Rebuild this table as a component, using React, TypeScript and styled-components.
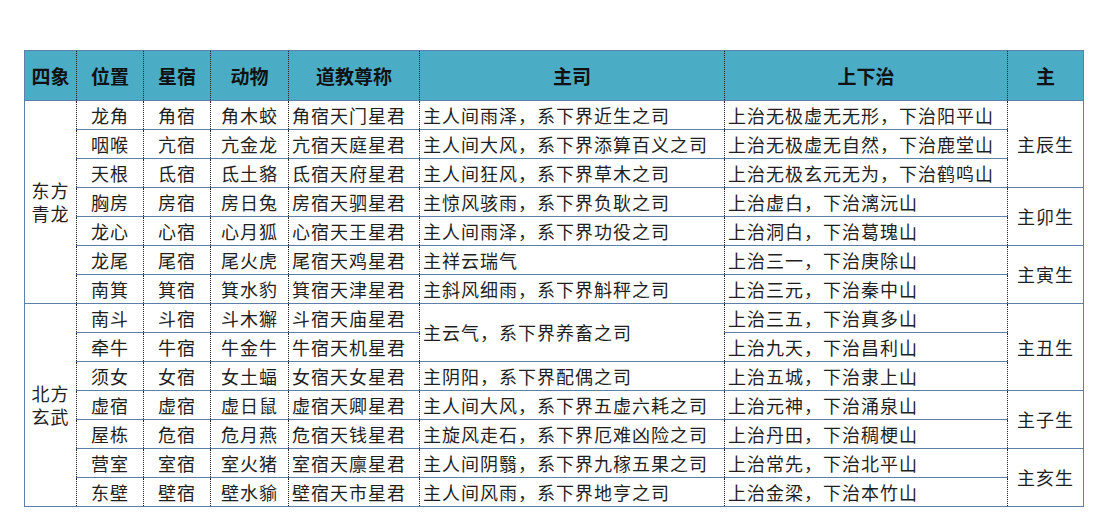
import React from "react";
import styled, { createGlobalStyle } from "styled-components";

const GlobalStyle = createGlobalStyle`
  html, body {
    margin: 0;
    padding: 0;
    background: #ffffff;
  }
  body {
    font-family: "Noto Sans CJK SC", "Noto Sans", sans-serif;
    color: #111;
  }
`;

const Page = styled.div`
  padding: 50px 0 0 24px;
  width: 1103px;
  height: 526px;
  box-sizing: border-box;
`;

const Table = styled.table`
  border-collapse: collapse;
  table-layout: fixed;
  width: 1059px;
  border: 1px solid #5d7fa8; /* blue-grey outer rule */
`;

const Col = styled.col<{ $w: number }>`
  width: ${(p) => p.$w}px;
`;

const HeadRow = styled.tr`
  height: 50px;
  background-color: #4bacc6;
`;

const HeadCell = styled.th`
  font-size: 19px;
  font-weight: 700;
  color: #111;
  text-align: center;
  padding: 0;
  border-left: 1px dotted #222;
  border-right: 1px dotted #222;
  border-bottom: 1px solid #5d7fa8;
  border-top: 1px solid #5d7fa8;
`;

const BodyRow = styled.tr`
  height: 29px;
`;

const Cell = styled.td<{ $align?: "left" | "center"; $tall?: boolean }>`
  font-size: 18px;
  letter-spacing: 1px;
  line-height: ${(p) => (p.$tall ? "23px" : "25px")};
  color: #1f1f1f;
  text-align: ${(p) => p.$align ?? "center"};
  padding: ${(p) => (p.$align === "left" ? "0 0 0 3px" : "0")};
  white-space: ${(p) => (p.$tall ? "normal" : "nowrap")};
  overflow: hidden;
  vertical-align: middle;
  border-left: 1px dotted #222;
  border-right: 1px dotted #222;
  border-top: 1px solid #5d7fa8;
  border-bottom: 1px solid #5d7fa8;
`;

const Quadrant = styled.span`
  display: inline-block;
  width: 40px;
  text-align: center;
`;

type Span = { text: string; span: number };

interface Row {
  pos: string;
  xiu: string;
  animal: string;
  title: string;
  duty?: Span;
  rule: string;
  quad?: Span;
  star?: Span;
}

const rows: Row[] = [
  { pos: "龙角", xiu: "角宿", animal: "角木蛟", title: "角宿天门星君", duty: { text: "主人间雨泽，系下界近生之司", span: 1 }, rule: "上治无极虚无无形，下治阳平山", quad: { text: "东方青龙", span: 7 }, star: { text: "主辰生", span: 3 } },
  { pos: "咽喉", xiu: "亢宿", animal: "亢金龙", title: "亢宿天庭星君", duty: { text: "主人间大风，系下界添算百义之司", span: 1 }, rule: "上治无极虚无自然，下治鹿堂山" },
  { pos: "天根", xiu: "氐宿", animal: "氐土貉", title: "氐宿天府星君", duty: { text: "主人间狂风，系下界草木之司", span: 1 }, rule: "上治无极玄元无为，下治鹤鸣山" },
  { pos: "胸房", xiu: "房宿", animal: "房日兔", title: "房宿天驷星君", duty: { text: "主惊风骇雨，系下界负耿之司", span: 1 }, rule: "上治虚白，下治漓沅山", star: { text: "主卯生", span: 2 } },
  { pos: "龙心", xiu: "心宿", animal: "心月狐", title: "心宿天王星君", duty: { text: "主人间雨泽，系下界功役之司", span: 1 }, rule: "上治洞白，下治葛瑰山" },
  { pos: "龙尾", xiu: "尾宿", animal: "尾火虎", title: "尾宿天鸡星君", duty: { text: "主祥云瑞气", span: 1 }, rule: "上治三一，下治庚除山", star: { text: "主寅生", span: 2 } },
  { pos: "南箕", xiu: "箕宿", animal: "箕水豹", title: "箕宿天津星君", duty: { text: "主斜风细雨，系下界斛秤之司", span: 1 }, rule: "上治三元，下治秦中山" },
  { pos: "南斗", xiu: "斗宿", animal: "斗木獬", title: "斗宿天庙星君", duty: { text: "主云气，系下界养畜之司", span: 2 }, rule: "上治三五，下治真多山", quad: { text: "北方玄武", span: 7 }, star: { text: "主丑生", span: 3 } },
  { pos: "牵牛", xiu: "牛宿", animal: "牛金牛", title: "牛宿天机星君", rule: "上治九天，下治昌利山" },
  { pos: "须女", xiu: "女宿", animal: "女土蝠", title: "女宿天女星君", duty: { text: "主阴阳，系下界配偶之司", span: 1 }, rule: "上治五城，下治隶上山" },
  { pos: "虚宿", xiu: "虚宿", animal: "虚日鼠", title: "虚宿天卿星君", duty: { text: "主人间大风，系下界五虚六耗之司", span: 1 }, rule: "上治元神，下治涌泉山", star: { text: "主子生", span: 2 } },
  { pos: "屋栋", xiu: "危宿", animal: "危月燕", title: "危宿天钱星君", duty: { text: "主旋风走石，系下界厄难凶险之司", span: 1 }, rule: "上治丹田，下治稠梗山" },
  { pos: "营室", xiu: "室宿", animal: "室火猪", title: "室宿天廪星君", duty: { text: "主人间阴翳，系下界九稼五果之司", span: 1 }, rule: "上治常先，下治北平山", star: { text: "主亥生", span: 2 } },
  { pos: "东壁", xiu: "壁宿", animal: "壁水貐", title: "壁宿天市星君", duty: { text: "主人间风雨，系下界地亨之司", span: 1 }, rule: "上治金梁，下治本竹山" },
];

const widths = [52, 67, 67, 78, 131, 305, 283, 76];
const headers = ["四象", "位置", "星宿", "动物", "道教尊称", "主司", "上下治", "主"];

export default function App() {
  return (
    <Page>
      <GlobalStyle />
      <Table>
        <colgroup>
          {widths.map((w, i) => (
            <Col key={i} $w={w} />
          ))}
        </colgroup>
        <thead>
          <HeadRow>
            {headers.map((h) => (
              <HeadCell key={h}>{h}</HeadCell>
            ))}
          </HeadRow>
        </thead>
        <tbody>
          {rows.map((r) => (
            <BodyRow key={r.pos}>
              {r.quad && (
                <Cell rowSpan={r.quad.span} $tall>
                  <Quadrant>{r.quad.text}</Quadrant>
                </Cell>
              )}
              <Cell>{r.pos}</Cell>
              <Cell>{r.xiu}</Cell>
              <Cell>{r.animal}</Cell>
              <Cell $align="left">{r.title}</Cell>
              {r.duty && (
                <Cell $align="left" rowSpan={r.duty.span}>
                  {r.duty.text}
                </Cell>
              )}
              <Cell $align="left">{r.rule}</Cell>
              {r.star && <Cell rowSpan={r.star.span}>{r.star.text}</Cell>}
            </BodyRow>
          ))}
        </tbody>
      </Table>
    </Page>
  );
}
